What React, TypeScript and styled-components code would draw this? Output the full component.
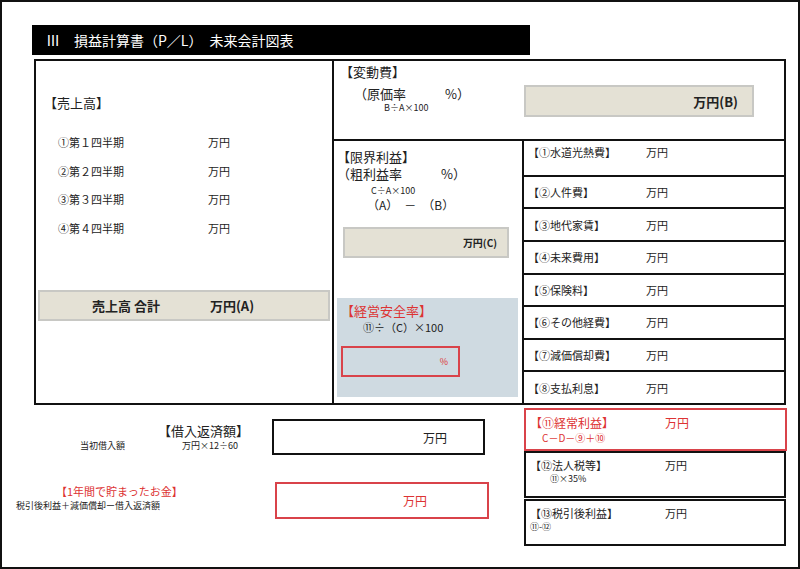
import React from "react";
import styled, { createGlobalStyle } from "styled-components";

const G = createGlobalStyle`
  html,body{margin:0;padding:0;background:#fff;}
  body{font-family:"Noto Sans CJK JP","Noto Sans",sans-serif;color:#222;}
`;
const Frame = styled.div`
  width:800px;height:569px;box-sizing:border-box;border:2px solid #111;
  padding:23px 0 0 30px;position:relative;
`;
const Title = styled.div`
  width:498px;height:30px;background:#000;color:#fff;font-size:14px;
  display:flex;align-items:center;padding-left:14px;box-sizing:border-box;gap:14px;
`;
const Main = styled.div`
  margin-top:4px;margin-left:2px;width:752px;height:346px;box-sizing:border-box;
  border:2px solid #111;display:grid;grid-template-columns:298px 190px 1fr;
  grid-template-rows:80px 1fr;
`;
const Sales = styled.div`
  grid-row:1 / 3;border-right:2px solid #111;padding:34px 0 0 8px;position:relative;
`;
const Head = styled.div<{red?:boolean;size?:number}>`
  font-size:${p=>p.size||13}px;color:${p=>p.red?"#d33":"#222"};line-height:1.3;
`;
const QRow = styled.div`
  display:flex;font-size:11px;padding-left:14px;height:28.5px;align-items:center;
  span:first-child{width:150px;}
`;
const Quarters = styled.div`margin-top:16px;`;
const BeigeBar = styled.div<{w:number;h:number}>`
  width:${p=>p.w}px;height:${p=>p.h}px;background:#e4e1d5;border:2px solid #c8c8c4;
  box-sizing:border-box;display:flex;align-items:center;font-weight:bold;
`;
const SalesTotal = styled(BeigeBar)`
  position:absolute;left:2px;top:229px;font-size:13px;padding-left:52px;gap:50px;
`;
const Variable = styled.div`
  grid-column:2 / 4;border-bottom:2px solid #111;display:flex;padding:3px 0 0 6px;
  justify-content:space-between;
`;
const Small = styled.div<{pad?:number}>`font-size:9px;padding-left:${p=>p.pad||0}px;line-height:1.3;`;
const Indent = styled.div<{pad:number}>`padding-left:${p=>p.pad}px;font-size:12px;line-height:1.35;white-space:pre;`;
const Margin = styled.div`
  border-right:2px solid #111;padding:8px 4px 6px 3px;display:flex;flex-direction:column;
`;
const Safety = styled.div`
  margin-top:auto;background:#cfdae1;height:99px;padding:5px 0 0 4px;box-sizing:border-box;
`;
const RedBox = styled.div<{w:number;h:number}>`
  width:${p=>p.w}px;height:${p=>p.h}px;border:2px solid #d9434a;box-sizing:border-box;
  color:#d33;display:flex;align-items:center;justify-content:flex-end;
`;
const Expenses = styled.div`display:flex;flex-direction:column;`;
const Exp = styled.div<{last?:boolean;top?:boolean}>`
  flex:1;border-bottom:${p=>p.last?"none":"2px solid #111"};display:flex;
  align-items:${p=>p.top?"flex-start":"center"};padding:${p=>p.top?"3px":"0"} 0 0 4px;font-size:11px;
  span:first-child{width:118px;}
`;
const Bottom = styled.div`
  display:grid;grid-template-columns:490px 262px;margin-left:2px;
`;
const Loans = styled.div`position:relative;font-size:11px;`;
const Card = styled.div<{red?:boolean;h:number;mt:number}>`
  height:${p=>p.h}px;margin-top:${p=>p.mt}px;box-sizing:border-box;
  border:2px solid ${p=>p.red?"#d9434a":"#111"};padding:4px 0 0 4px;font-size:11px;
  display:flex;flex-direction:column;
`;
const CardHead = styled.div<{red?:boolean}>`
  display:flex;color:${p=>p.red?"#d33":"#222"};font-size:${p=>p.red?12:11}px;
  span:first-child{width:135px;}
`;
const LoanBox = styled.div<{red?:boolean}>`
  width:${p=>p.red?214:213}px;height:${p=>p.red?37:36}px;box-sizing:border-box;
  border:2px solid ${p=>p.red?"#d9434a":"#111"};display:flex;align-items:center;
  justify-content:flex-end;padding-right:${p=>p.red?60:36}px;font-size:12px;
  color:${p=>p.red?"#d33":"#222"};
`;
const LoanRow = styled.div<{mt:number}>`display:flex;align-items:center;margin-top:${p=>p.mt}px;`;
const LoanText = styled.div`width:238px;position:relative;height:36px;`;
const Abs = styled.div<{x:number;y:number;size:number;red?:boolean}>`
  position:absolute;left:${p=>p.x}px;top:${p=>p.y}px;font-size:${p=>p.size}px;white-space:nowrap;
  color:${p=>p.red?"#d33":"#222"};
`;

const exps = ["【①水道光熱費】","【②人件費】","【③地代家賃】","【④未来費用】","【⑤保険料】","【⑥その他経費】","【⑦減価償却費】","【⑧支払利息】"];

export default function App(){
  return <Frame><G/>
    <Title><span>Ⅲ</span><span>損益計算書（P／L）　未来会計図表</span></Title>
    <Main>
      <Sales>
        <Head>【売上高】</Head>
        <Quarters>
          {["①第１四半期","②第２四半期","③第３四半期","④第４四半期"].map(q=>
            <QRow key={q}><span>{q}</span><span>万円</span></QRow>)}
        </Quarters>
        <SalesTotal w={292} h={31}><span>売上高 合計</span><span>万円(A)</span></SalesTotal>
      </Sales>
      <Variable>
        <div>
          <Head>【変動費】</Head>
          <Indent pad={14} style={{fontSize:13,marginTop:4}}>（原価率　　　%）</Indent>
          <Small pad={44}>B÷A×100</Small>
        </div>
        <BeigeBar w={230} h={32} style={{marginTop:21,marginRight:30,justifyContent:"flex-end",paddingRight:14,fontSize:13}}>万円(B)</BeigeBar>
      </Variable>
      <Margin>
        <Head>【限界利益】</Head>
        <Indent pad={0} style={{fontSize:13,lineHeight:1.25}}>（粗利益率　　　%）</Indent>
        <Small pad={34} style={{marginTop:3}}>C÷A×100</Small>
        <Indent pad={30}>（A）　－　（B）</Indent>
        <BeigeBar w={166} h={31} style={{marginTop:14,marginLeft:6,justifyContent:"flex-end",paddingRight:10,fontSize:10}}>万円(C)</BeigeBar>
        <Safety>
          <Head red>【経営安全率】</Head>
          <Indent pad={22} style={{fontSize:11}}>⑪÷（C）×100</Indent>
          <RedBox w={119} h={31} style={{marginTop:11,fontSize:9,paddingRight:10}}>%</RedBox>
        </Safety>
      </Margin>
      <Expenses>
        {exps.map((e,i)=><Exp key={e} top={i===0} last={i===7}><span>{e}</span><span>万円</span></Exp>)}
      </Expenses>
    </Main>
    <Bottom>
      <Loans>
        <LoanRow mt={14}>
          <LoanText>
            <Abs x={124} y={2} size={13}>【借入返済額】</Abs>
            <Abs x={46} y={20} size={9}>当初借入額</Abs>
            <Abs x={148} y={20} size={9}>万円×12÷60</Abs>
          </LoanText>
          <LoanBox>万円</LoanBox>
        </LoanRow>
        <LoanRow mt={27}>
          <LoanText>
            <Abs x={22} y={0} size={11} red>【1年間で貯まったお金】</Abs>
            <Abs x={-18} y={16} size={9}>税引後利益＋減価償却ー借入返済額</Abs>
          </LoanText>
          <LoanBox red style={{marginLeft:3}}>万円</LoanBox>
        </LoanRow>
      </Loans>
      <div>
        <Card red h={43} mt={3} style={{width:263}}>
          <CardHead red><span>【⑪経常利益】</span><span>万円</span></CardHead>
          <Small pad={12} style={{color:"#d33",fontSize:10}}>C－D－⑨＋⑩</Small>
        </Card>
        <Card h={47} mt={0}>
          <CardHead><span>【⑫法人税等】</span><span>万円</span></CardHead>
          <Small pad={20}>⑪×35%</Small>
        </Card>
        <Card h={47} mt={1}>
          <CardHead><span>【⑬税引後利益】</span><span>万円</span></CardHead>
          <Small>⑪-⑫</Small>
        </Card>
      </div>
    </Bottom>
  </Frame>;
}
